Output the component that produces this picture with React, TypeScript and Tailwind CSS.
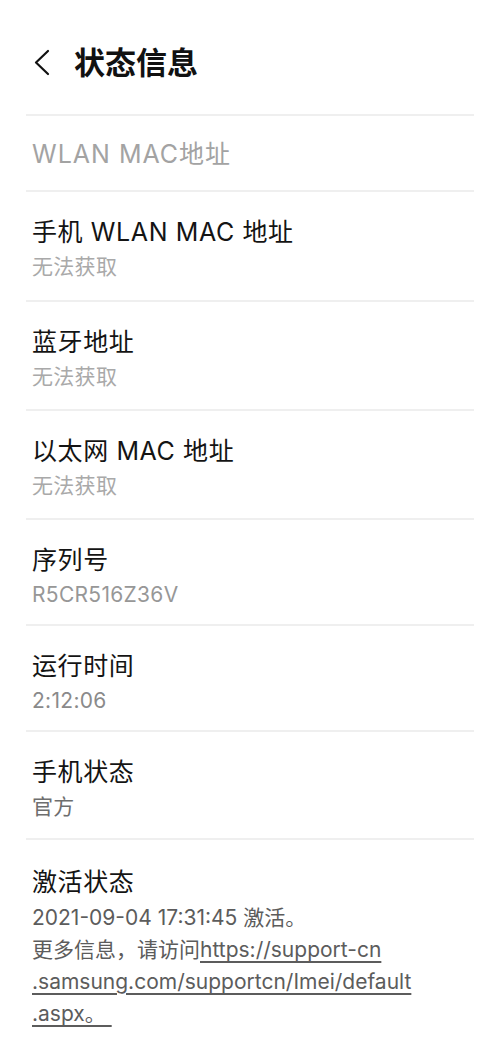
import React from 'react';

type Item = {
  label: string;
  value: string;
  valueColor: string;
  pb: string;
};

const ITEMS: Item[] = [
  { label: '手机 WLAN MAC 地址', value: '无法获取', valueColor: 'text-[#a9a9a9]', pb: 'pb-[16px]' },
  { label: '蓝牙地址', value: '无法获取', valueColor: 'text-[#a9a9a9]', pb: 'pb-[15px]' },
  { label: '以太网 MAC 地址', value: '无法获取', valueColor: 'text-[#a9a9a9]', pb: 'pb-[15px]' },
  { label: '序列号', value: 'R5CR516Z36V', valueColor: 'text-[#979797]', pb: 'pb-[12px]' },
  { label: '运行时间', value: '2:12:06', valueColor: 'text-[#8a8a8a]', pb: 'pb-[12px]' },
  { label: '手机状态', value: '官方', valueColor: 'text-[#6e6e6e]', pb: 'pb-[14px]' },
];

const FONT = { fontFamily: 'Inter, "Noto Sans CJK SC", sans-serif' };

function Divider() {
  return <div className="h-[2px] bg-[#efefef]" />;
}

export default function App() {
  return (
    <div className="w-[500px] h-[1060px] bg-white overflow-hidden px-[26px]" style={FONT}>
      {/* 标题栏 */}
      <div className="flex items-center pt-[44px] pb-[32px] h-[114px]">
        <svg width="20" height="28" viewBox="0 0 20 28" className="ml-[7px]" fill="none">
          <path d="M15 2 L3 13.5 L15 25" stroke="#111" strokeWidth="2.2" strokeLinecap="round" strokeLinejoin="round" />
        </svg>
        <h1 className="ml-[21px] text-[31px] leading-[38px] font-bold text-[#111]">状态信息</h1>
      </div>
      <Divider />

      {/* WLAN MAC地址 (disabled) */}
      <div className="px-[6px] pt-[20px] pb-[18px]">
        <div className="text-[25px] leading-[36px] tracking-[1px] text-[#a3a3a3]">WLAN MAC地址</div>
      </div>
      <Divider />

      {ITEMS.map((item) => (
        <div key={item.label}>
          <div className={`px-[6px] pt-[22px] ${item.pb}`}>
            <div className="text-[25px] leading-[36px] tracking-[0.6px] text-[#141414]">{item.label}</div>
            <div className={`text-[21px] leading-[34px] tracking-[0.3px] ${item.valueColor}`}>{item.value}</div>
          </div>
          <Divider />
        </div>
      ))}

      {/* 激活状态 */}
      <div className="px-[6px] pt-[24px]">
        <div className="text-[25px] leading-[36px] tracking-[0.6px] text-[#141414]">激活状态</div>
        <div className="mt-[2px] text-[21px] leading-[32px] text-[#5c5c5c]">
          <div>2021-09-04 17:31:45 激活。</div>
          <div>
            更多信息，请访问<span className="underline underline-offset-[4px]">https://support-cn</span>
          </div>
          <div className="underline underline-offset-[4px]">.samsung.com/supportcn/Imei/default</div>
          <div>
            <span className="underline underline-offset-[4px] whitespace-pre">.aspx。 </span>
          </div>
        </div>
      </div>
    </div>
  );
}
